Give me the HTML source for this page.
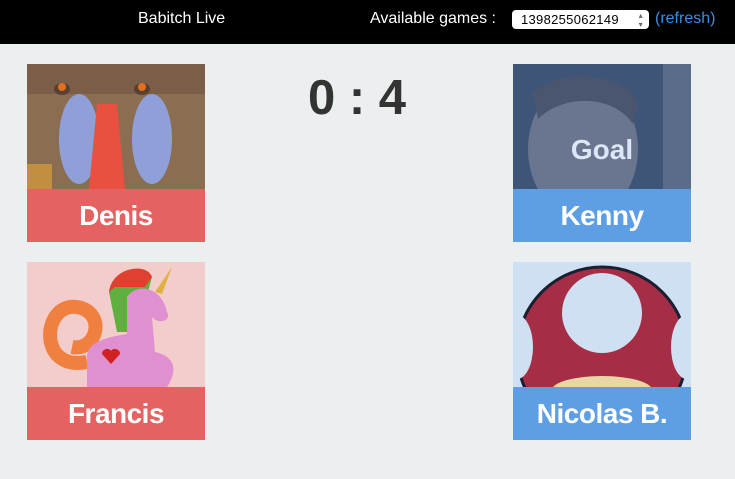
<!DOCTYPE html>
<html><head><meta charset="utf-8"><style>
*{margin:0;padding:0;box-sizing:border-box}
body{width:735px;height:479px;background:#ebeff0;font-family:"Liberation Sans",Arial,sans-serif;position:relative;overflow:hidden}
.top{position:absolute;left:0;top:0;width:735px;height:44px;background:#000;color:#fff;font-size:16px}
.card{position:absolute;width:178px;height:178px;overflow:hidden}
.lbl{position:absolute;left:0;bottom:0;width:178px;height:53px;color:#fff;font-weight:bold;font-size:28px;text-align:center;line-height:53px;letter-spacing:-0.5px}
.red{background:#e46262}.blue{background:#5e9ee5}
</style></head><body>
<div class="top">
<div style="position:absolute;left:138px;top:10px">Babitch Live</div>
<div style="position:absolute;left:370px;top:10px">Available games :</div>
<div style="position:absolute;left:512px;top:10px;width:137px;height:19px;background:#fff;border-radius:4px;color:#000;font-size:13px;line-height:19px;padding-left:9px;letter-spacing:0.3px">1398255062149<span style="position:absolute;right:6px;top:0;font-size:8px;color:#666;line-height:9px;top:1px">▴<br>▾</span></div>
<div style="position:absolute;left:655px;top:10px;color:#3b8ee0">(refresh)</div>
</div>
<div style="position:absolute;left:308px;top:70px;font-size:49px;font-weight:bold;color:#333">0 : 4</div>

<div class="card" style="left:27px;top:64px;background:#8a6a50">
<svg width="178" height="125" viewBox="0 0 178 125">
<rect width="178" height="125" fill="#8b6d52"/>
<rect x="0" y="0" width="178" height="30" fill="#7a5e48"/>
<ellipse cx="35" cy="25" rx="8" ry="6" fill="#5a4030"/><circle cx="35" cy="23" r="4" fill="#e07020"/>
<ellipse cx="115" cy="25" rx="8" ry="6" fill="#5a4030"/><circle cx="115" cy="23" r="4" fill="#e07020"/>
<ellipse cx="52" cy="75" rx="20" ry="45" fill="#8fa0d8"/>
<ellipse cx="125" cy="75" rx="20" ry="45" fill="#8fa0d8"/>
<path d="M70 40 L90 40 L98 125 L62 125Z" fill="#e85040"/>
<rect x="0" y="100" width="25" height="25" fill="#c09040"/>
</svg>
<div class="lbl red">Denis</div></div>

<div class="card" style="left:27px;top:262px;background:#f2cdcc">
<svg width="178" height="125" viewBox="0 0 178 125">
<rect width="178" height="125" fill="#f2cdcc"/>
<path d="M60 100 C10 110 15 40 50 45 C80 50 70 90 45 85" fill="none" stroke="#f08040" stroke-width="14"/>
<path d="M82 30 C85 5 120 0 125 15 L110 70 L90 70Z" fill="#60b040"/>
<path d="M82 30 C85 5 120 0 125 15 L118 25 L88 25Z" fill="#e04030"/>
<path d="M145 5 L128 30 L135 32Z" fill="#e0b040"/>
<path d="M60 125 L60 95 C60 80 80 75 100 72 L100 35 C110 20 135 25 140 50 C145 60 130 62 125 55 L128 90 C150 95 150 110 140 125Z" fill="#e090d0"/>
<path d="M75 92 a5 5 0 0 1 9 -3 a5 5 0 0 1 9 3 l-9 10z" fill="#d02020"/>
</svg>
<div class="lbl red">Francis</div></div>

<div class="card" style="left:513px;top:64px;background:#3d5170">
<svg width="178" height="125" viewBox="0 0 178 125">
<rect width="178" height="125" fill="#3f5577"/>
<ellipse cx="70" cy="85" rx="55" ry="70" fill="#6a7590"/>
<path d="M20 30 C40 5 110 5 125 40 L120 60 C100 30 50 30 25 55Z" fill="#4a5670"/>
<rect x="150" y="0" width="28" height="125" fill="#5a6c8a"/>
</svg>
<div style="position:absolute;left:0;top:70px;width:178px;text-align:center;color:#dde6f5;font-weight:bold;font-size:28px">Goal</div>
<div class="lbl blue">Kenny</div></div>

<div class="card" style="left:513px;top:262px;background:#cfe0f3">
<svg width="178" height="125" viewBox="0 0 178 125">
<rect width="178" height="125" fill="#cfe0f3"/>
<circle cx="89" cy="90" r="85" fill="#a52d45" stroke="#1a2030" stroke-width="3"/>
<circle cx="89" cy="51" r="40" fill="#cfe0f3"/>
<ellipse cx="4" cy="85" rx="16" ry="32" fill="#cfe0f3"/>
<ellipse cx="174" cy="85" rx="16" ry="32" fill="#cfe0f3"/>
<ellipse cx="89" cy="128" rx="50" ry="14" fill="#e8d6a4"/>
</svg>
<div class="lbl blue">Nicolas B.</div></div>
</body></html>
